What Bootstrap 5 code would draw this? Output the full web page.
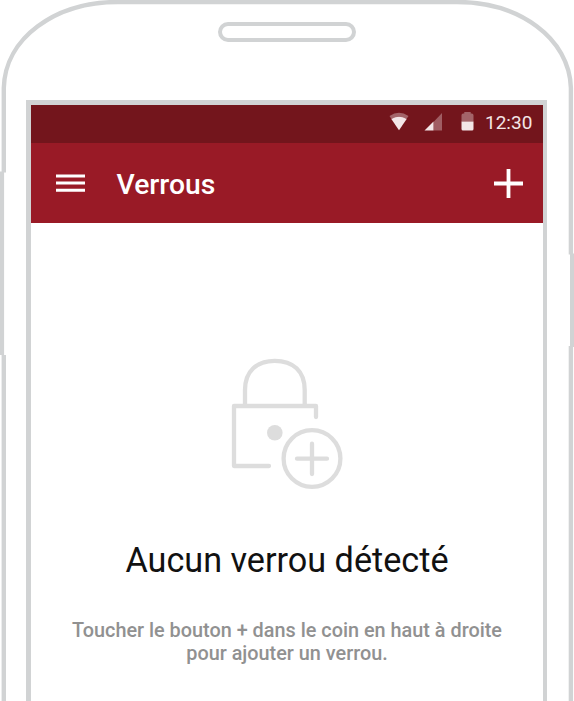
<!DOCTYPE html>
<html lang="fr">
<head>
<meta charset="utf-8">
<meta name="viewport" content="width=device-width, initial-scale=1">
<title>Verrous</title>
<link href="https://cdn.jsdelivr.net/npm/bootstrap@5.3.0/dist/css/bootstrap.min.css" rel="stylesheet">
<style>
body{font-family:Roboto,"Liberation Sans",sans-serif;background:#fff}
.phone{width:574px;height:701px}
.shell{z-index:0}
.speaker{width:138px;height:20px;border:4.5px solid #d1d3d4;margin-top:22px}
.display{z-index:1;width:521px;height:602px;margin:58px 0 0 26px;border:solid #d1d3d4;border-width:5px 4px 0 5px;background:#fff}
.status{height:38px;background:#73151c;color:#f3e6e7;padding-right:11px}
.clock{font-size:19px;line-height:36px;height:38px;width:47px;margin-left:10px;white-space:nowrap}
.appbar{height:80px;background:#991a26;padding:0 20px 0 25px}
.appbar h1{font-size:28.3px;font-weight:500;margin:4px 0 0 31.500px;line-height:36px}
.lock{margin-top:131px}
.headline{font-size:34.200px;font-weight:400;color:#111;line-height:42px;margin-top:45px}
.hint{font-size:19.850px;font-weight:500;color:#919191;line-height:23.500px;margin-top:38px}
</style>
<script src="https://cdn.jsdelivr.net/npm/bootstrap@5.3.0/dist/js/bootstrap.bundle.min.js"></script>
</head>
<body class="overflow-hidden">
<div class="phone position-relative overflow-hidden d-flex flex-column align-items-start">
  <svg class="shell position-absolute top-0 start-0" width="574" height="701" fill="none" stroke="#d1d3d4" stroke-width="4.4" aria-hidden="true">
    <path d="M3.8 701V355M1.9 355V171.500M3.8 172.500V88C5 38 55 2 118 2H457C519 2 569.500 38 570.900 88V254.500M572.200 253.500V347M570.900 346V701"/>
  </svg>
  <div class="speaker rounded-pill align-self-center position-relative"></div>
  <main class="display position-relative">
    <div class="status d-flex align-items-center justify-content-end">
      <svg width="86" height="38" fill="#f3e6e7" aria-hidden="true">
        <path opacity=".38" d="M.5 11Q10 4.500 19.500 11L17.500 14Q10 9.500 2.500 14Z"/>
        <path d="M2.300 14Q10 9.300 17.700 14L10 25.200Z"/>
        <path opacity=".35" d="M44.500 17L53 8V25.500H44.500Z"/>
        <path d="M35.500 25.500L44.500 16.500V25.500Z"/>
        <path opacity=".38" d="M72.500 16.500V10.200Q72.500 8.500 74.200 8.500H75.300V7H81.700V8.500H82.800Q84.500 8.500 84.500 10.200V16.500Z"/>
        <path d="M72.500 16.500H84.500V24Q84.500 25.500 83 25.500H74Q72.500 25.500 72.500 24Z"/>
      </svg>
      <span class="clock">12:30</span>
    </div>
    <header class="appbar d-flex align-items-center text-white">
      <svg width="29" height="20" stroke="#fff" stroke-width="2.900" aria-label="Menu"><path d="M0 3H29M0 10H29M0 17.200H29"/></svg>
      <h1>Verrous</h1>
      <svg class="ms-auto" width="29" height="31" stroke="#fff" stroke-width="3.800" aria-label="Ajouter"><path d="M0 16.500H29M14.500 2V31"/></svg>
    </header>
    <section class="text-center">
      <svg class="lock d-block mx-auto" width="112" height="140" viewBox="231 354 112 140" fill="none" stroke="#ddd" stroke-width="4.300" stroke-linecap="round" stroke-linejoin="round" aria-hidden="true">
        <path d="M245 405V390C245 371 257 360.800 274.800 360.800C293 360.800 304.700 371 304.700 390V405M316 417V406H234V466H269"/>
        <circle cx="274.800" cy="432.800" r="7.800" fill="#ddd" stroke="none"/>
        <circle cx="312" cy="458.500" r="28.400"/>
        <path d="M297 458.700H327M312 443.700V474"/>
      </svg>
      <h2 class="headline mb-0">Aucun verrou détecté</h2>
      <p class="hint mb-0">Toucher le bouton + dans le coin en haut à droite<br>pour ajouter un verrou.</p>
    </section>
  </main>
</div>
</body>
</html>
